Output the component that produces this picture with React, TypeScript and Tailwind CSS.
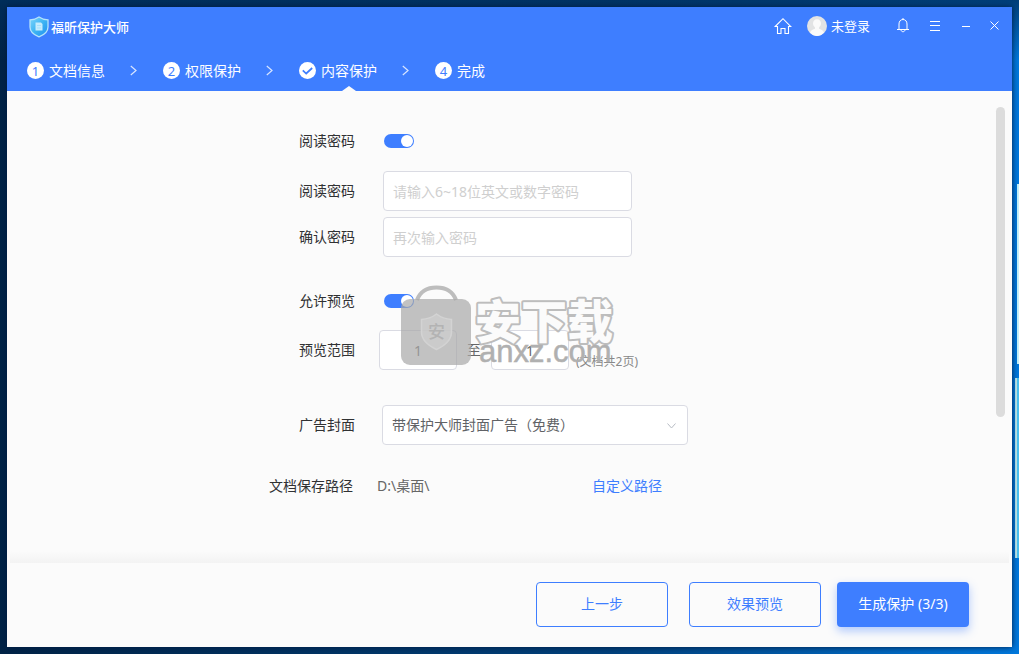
import { useState, type ReactNode } from 'react';

const steps = [
  { id: 1, label: '文档信息' },
  { id: 2, label: '权限保护' },
  { id: 3, label: '内容保护' },
  { id: 4, label: '完成' },
];

function ShieldLogo() {
  return (
    <svg width="20" height="22" viewBox="0 0 20 22" aria-hidden="true">
      <defs>
        <linearGradient id="shield" x1="0" y1="0" x2="1" y2="1">
          <stop offset="0" stopColor="#7fd6fb" />
          <stop offset="0.5" stopColor="#3db4f3" />
          <stop offset="1" stopColor="#1f8df0" />
        </linearGradient>
      </defs>
      <path d="M10 1C7.500 2.800 4.500 3.700 1 3.800V11C1 15.500 4.500 18.800 10 20.800C15.500 18.800 19 15.500 19 11V3.800C15.500 3.700 12.500 2.800 10 1Z" fill="url(#shield)" stroke="#b5e3fb" strokeWidth="1.300" />
      <path d="M6.500 6.500H12L13.500 8V14.500H6.500Z" fill="#c5ecfd" />
      <path d="M8 9.500H12M8 12H12" stroke="#a5dffb" strokeWidth="1" />
    </svg>
  );
}

function HomeIcon() {
  return (
    <svg width="18" height="18" viewBox="0 0 18 18" fill="none" stroke="currentColor" strokeWidth="1.100" aria-hidden="true">
      <path d="M1.200 9.500L9 1.700L16.800 9.500H14.500V16.500H11V11.500H7V16.500H3.500V9.500Z" />
    </svg>
  );
}

function Avatar() {
  return (
    <svg width="20" height="20" viewBox="0 0 20 20" aria-hidden="true">
      <circle cx="10" cy="10" r="10" fill="#e2e3e4" />
      <path d="M10 3.200C7.600 3.200 6 5 6 7.300C6 9.200 6.900 10.500 8 11.400V12.700C6 13.500 4 14 3 16.500C5 19 7.500 20 10 20C12.500 20 15 19 17 16.500C16 14 14 13.500 12 12.700V11.400C13.100 10.500 14 9.200 14 7.300C14 5 12.400 3.200 10 3.200Z" fill="#fafafa" />
    </svg>
  );
}

function BellIcon() {
  return (
    <svg width="12" height="15" viewBox="0 0 12 15" fill="none" stroke="currentColor" strokeWidth="1" aria-hidden="true">
      <path d="M6 0V1.500M0 11.500H12M2 11.500V6C2 3.300 3.600 1.500 6 1.500C8.400 1.500 10 3.300 10 6V11.500M4 12C4.300 14.300 7.700 14.300 8 12" />
    </svg>
  );
}

function Chevron() {
  return (
    <svg width="7" height="11" viewBox="0 0 7 11" fill="none" stroke="#d8e5ff" strokeWidth="1.200" aria-hidden="true">
      <path d="M0.800 1L6 5.500L0.800 10" />
    </svg>
  );
}

function Row({ label, htmlFor, children }: { label: string; htmlFor: string; children: ReactNode }) {
  return (
    <div className="flex h-10 items-center">
      <label htmlFor={htmlFor} className="w-[348px] shrink-0 text-right">
        {label}
      </label>
      {children}
    </div>
  );
}

function Switch({ id }: { id: string }) {
  const [on, setOn] = useState(true);
  return (
    <input
      id={id}
      type="checkbox"
      role="switch"
      checked={on}
      onChange={() => setOn(!on)}
      className="ml-[29px] h-3.5 w-[30px] appearance-none rounded-full bg-gray-300 before:m-px before:block before:size-3 before:rounded-full before:bg-white checked:bg-[#3e7eff] checked:before:ml-[17px]"
    />
  );
}

function Watermark() {
  return (
    <svg className="pointer-events-none absolute top-[193px] left-[394px]" width="216" height="86" viewBox="0 0 216 86" aria-hidden="true">
      <path d="M16 16C19 8 26 3.500 35.500 3.500C45 3.500 52 8 55 16" fill="none" stroke="#bdbdbd" strokeWidth="4" />
      <rect y="15" width="70" height="66" rx="9" fill="#a8a8a8" fillOpacity="0.700" />
      <path d="M35.500 30C31 33.500 26 35.200 20.500 35.500V48C20.500 56 26 61 35.500 65.500C45 61 50.500 56 50.500 48V35.500C45 35.200 40 33.500 35.500 30Z" fill="#cfcfcf" fillOpacity="0.700" stroke="#d3d3d3" strokeWidth="1.500" />
      <text x="35.500" y="54" textAnchor="middle" className="fill-[#b3b3b3] font-['Noto_Sans_CJK_SC',sans-serif] text-[17px] font-medium">安</text>
      <text x="74" y="54" className="fill-[#fbfbfb] stroke-[#bdbdbd] stroke-4 font-['Noto_Sans_CJK_SC',sans-serif] text-[46px] font-black [paint-order:stroke] [stroke-linejoin:round]">安下载</text>
      <text x="78" y="78" className="fill-[#b0b0b0] stroke-[#b0b0b0] font-['Liberation_Sans',sans-serif] text-[31px] [stroke-width:0.5px]">anxz.com</text>
    </svg>
  );
}

export default function App() {
  const field = 'h-10 rounded border border-[#dadbe3] bg-white text-sm outline-none';
  return (
    <div className="relative flex min-h-screen flex-col bg-[linear-gradient(to_bottom,#00305fcc_0,transparent_60px),linear-gradient(to_right,#002346,#00417c_60%,#0078dc)] p-[7px] font-['Noto_Sans','Noto_Sans_CJK_SC',sans-serif] text-sm leading-5 text-[#303133]">
      <div className="absolute top-[184px] right-0 h-[180px] w-0.5 bg-[#c9f4fb]" />
      <div className="absolute top-[378px] right-0 h-[180px] w-1 border-l-2 border-[#c3eef0] bg-[#4cc3f2]" />
      <div className="relative flex grow flex-col bg-[#fbfbfb] shadow-[0_0_6px_#001a40]">
        <header className="bg-[#3e7eff] text-white">
          <div className="flex h-10 items-center justify-between">
            <h1 className="ml-[22px] flex items-center gap-0.5 text-[13px] font-medium">
              <ShieldLogo />
              福昕保护大师
            </h1>
            <div className="flex items-center pr-[13px] pb-[3px]">
              <button type="button" aria-label="主页"><HomeIcon /></button>
              <button type="button" className="ml-[15px] flex items-center gap-1 text-[13px]"><Avatar />未登录</button>
              <button type="button" aria-label="通知" className="ml-[27px]"><BellIcon /></button>
              <button type="button" aria-label="菜单" className="ml-5">
                <svg width="12" height="10" viewBox="0 0 12 10" stroke="currentColor"><path d="M1 0.500H11M1 4.500H11M1 9.500H11" /></svg>
              </button>
              <button type="button" aria-label="最小化" className="ml-5">
                <svg width="10" height="10" viewBox="0 0 10 10" stroke="currentColor"><path d="M1 5.500H9" /></svg>
              </button>
              <button type="button" aria-label="关闭" className="ml-[19px]">
                <svg width="9" height="9" viewBox="0 0 9 9" stroke="currentColor"><path d="M0.500 0.500L8.500 8.500M8.500 0.500L0.500 8.500" /></svg>
              </button>
            </div>
          </div>
          <ol className="flex h-11 pl-5">
            {steps.map((s, i) => (
              <li key={s.id} className="relative flex h-11 items-center pt-[3px]">
                {i > 0 && <span className="mr-[26px] ml-[25px]"><Chevron /></span>}
                <span className="mr-[5px] flex size-[17px] items-center justify-center rounded-full bg-white text-[13px] text-[#3e7eff]">
                  {s.id === 3 ? (
                    <svg width="11" height="8" viewBox="0 0 11 8" fill="none" stroke="currentColor" strokeWidth="1.700"><path d="M0.800 3.300L4.200 6.500L10.200 1" /></svg>
                  ) : (
                    s.id
                  )}
                </span>
                {s.label}
                {s.id === 3 && (
                  <svg className="absolute right-[21px] bottom-0" width="14" height="5" viewBox="0 0 14 5" aria-hidden="true"><path d="M0 5L7 0L14 5Z" fill="#fbfbfb" /></svg>
                )}
              </li>
            ))}
          </ol>
        </header>

        <main className="relative flex grow">
          <form className="grow pt-[30px]">
            <Row label="阅读密码" htmlFor="read"><Switch id="read" /></Row>
            <div className="mt-2.5">
              <Row label="阅读密码" htmlFor="pw">
                <input id="pw" type="password" placeholder="请输入6~18位英文或数字密码" className={`${field} ml-7 w-[249px] px-[9px] placeholder:text-[#cfcfcf]`} />
              </Row>
            </div>
            <div className="mt-1.5">
              <Row label="确认密码" htmlFor="pw2">
                <input id="pw2" type="password" placeholder="再次输入密码" className={`${field} ml-7 w-[249px] px-[9px] placeholder:text-[#cfcfcf]`} />
              </Row>
            </div>
            <div className="mt-6"><Row label="允许预览" htmlFor="preview"><Switch id="preview" /></Row></div>
            <div className="mt-[9px]">
              <Row label="预览范围" htmlFor="from">
                <input id="from" defaultValue="1" className={`${field} ml-6 w-[78px] text-center text-[#666]`} />
                <label htmlFor="to" className="mx-2.5 text-[#666]">至</label>
                <input id="to" defaultValue="1" className={`${field} w-[78px] text-center text-[#666]`} />
                <span className="ml-[7px] self-end text-xs text-[#888]">(文档共2页)</span>
              </Row>
            </div>
            <div className="mt-[35px]">
              <Row label="广告封面" htmlFor="cover">
                <div className="relative ml-[27px] w-[306px]">
                  <select id="cover" className={`${field} w-full appearance-none px-[9px] text-[#606266]`}>
                    <option>带保护大师封面广告（免费）</option>
                  </select>
                  <svg className="pointer-events-none absolute top-[18px] right-3" width="9" height="6" viewBox="0 0 9 6" fill="none" stroke="#b8bcc4" aria-hidden="true"><path d="M0.500 0.500L4.500 5L8.500 0.500" /></svg>
                </div>
              </Row>
            </div>
            <div className="mt-[21px] flex h-10 items-center">
              <span className="w-[346px] text-right">文档保存路径</span>
              <span className="ml-6 w-[215px] text-[#666]">D:\桌面\</span>
              <a href="#path" className="text-[#3e7eff]">自定义路径</a>
            </div>
          </form>
          <div className="mt-4 mr-[7px] h-[310px] w-[9px] rounded-full bg-[#dcdcdc]" />
          <Watermark />
        </main>

        <div className="mx-[3px] h-3 bg-linear-to-b from-[#fbfbfb] to-[#f3f3f3]" />
        <footer className="flex h-[84px] items-center justify-end pr-[43px] pb-0.5 text-[#3e7eff]">
          <button type="button" className="h-[45px] w-[132px] rounded border border-[#3e7eff]">上一步</button>
          <button type="button" className="ml-[21px] h-[45px] w-[132px] rounded border border-[#3e7eff]">效果预览</button>
          <button type="button" className="ml-4 h-[45px] w-[132px] rounded bg-[#3e7eff] text-white shadow-[0_4px_10px_#3e7eff66]">生成保护 (3/3)</button>
        </footer>
      </div>
    </div>
  );
}
